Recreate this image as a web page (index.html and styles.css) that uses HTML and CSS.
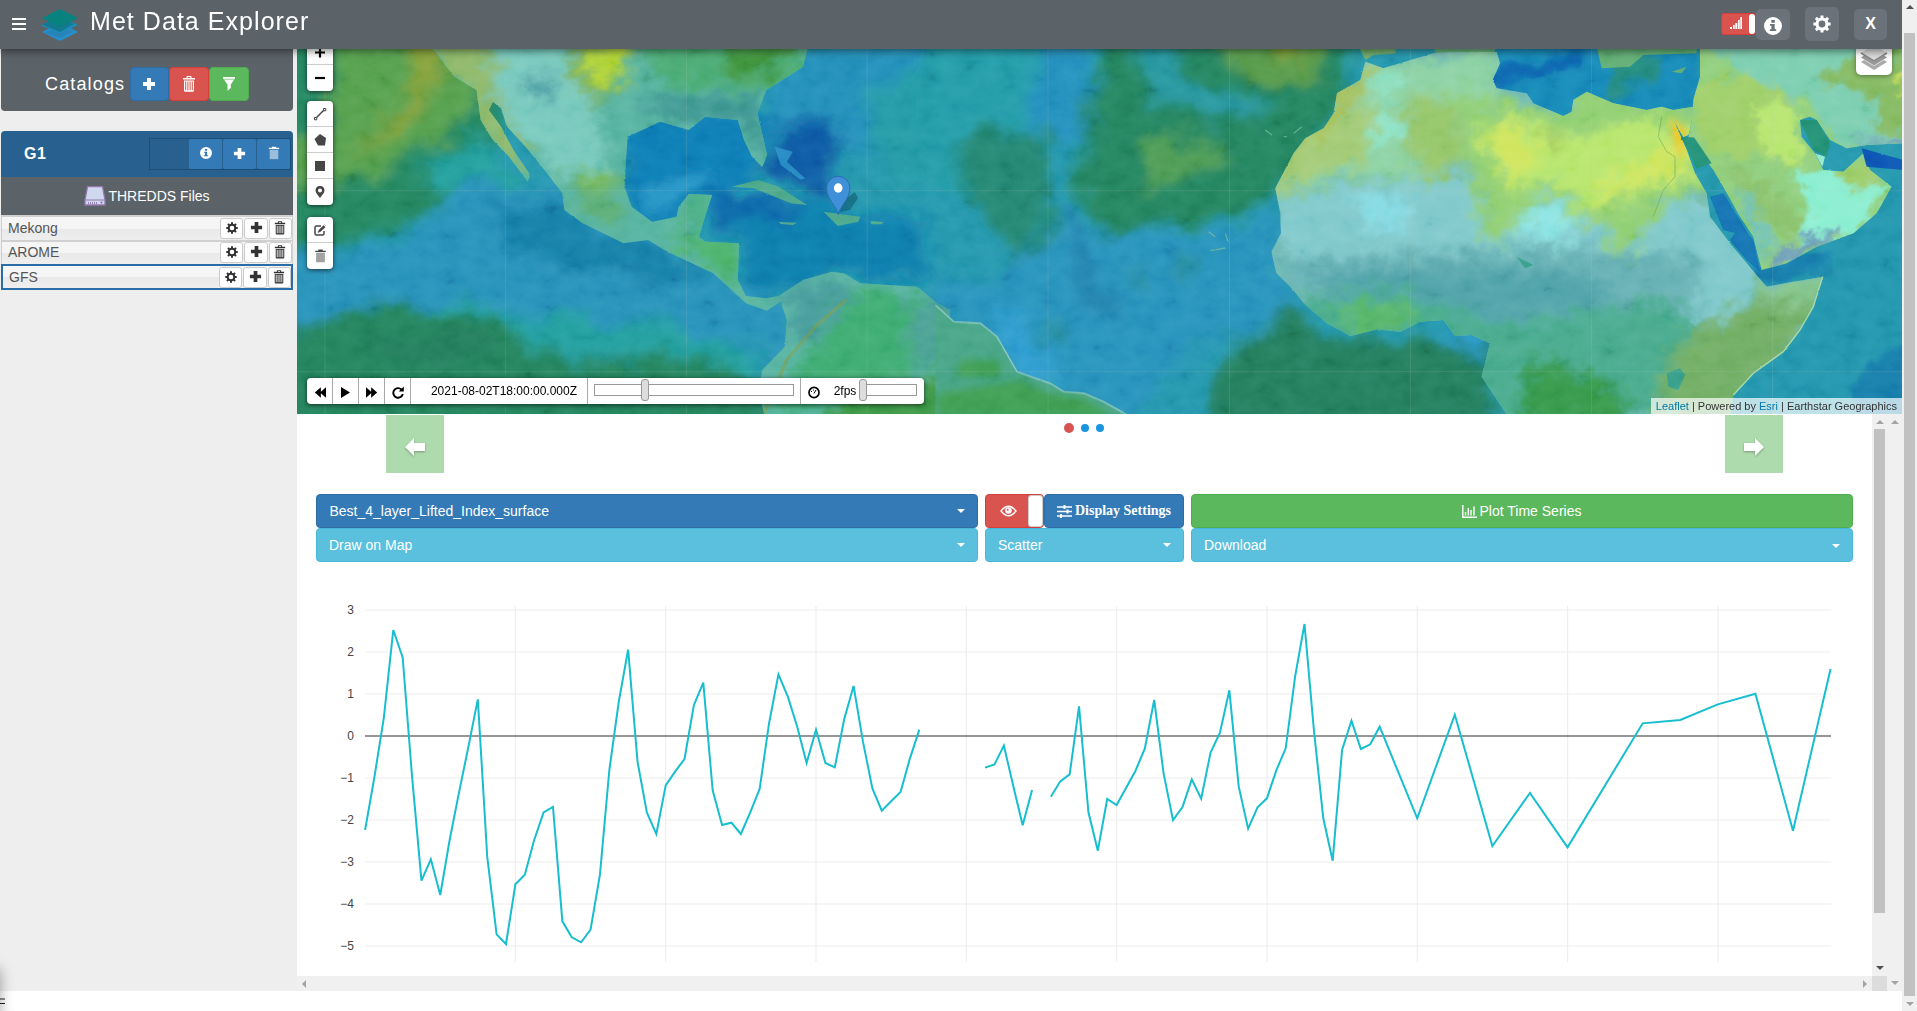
FILE: index.html
```html
<!DOCTYPE html>
<html lang="en">
<head>
<meta charset="utf-8">
<title>Met Data Explorer</title>
<link rel="stylesheet" href="styles.css">
</head>
<body>
<svg class="defs" width="0" height="0">
  <symbol id="plus" viewBox="0 0 14 14"><path d="M5 1h4v4h4v4H9v4H5V9H1V5h4z"/></symbol>
  <symbol id="trash" viewBox="0 0 14 16"><path fill-rule="evenodd" d="M4.500 2V.8Q4.500 0 5.300 0h3.400q.8 0 .8.800V2H13v1.500H1V2zM5.700 1.100V2h2.600v-.9zM2 4.500h10V14.500q0 1.200-1.200 1.200H3.200Q2 15.700 2 14.500zM3.200 5.500v8.700h1V5.500zm2.200 0v8.700h1V5.500zm2.200 0v8.700h1V5.500zm2.200 0v8.700h1V5.500z"/></symbol>
  <symbol id="trashlight" viewBox="0 0 14 16"><path d="M4.500 2V.6h5V2H13v1.300H1V2z"/><path opacity=".5" d="M2 4.200h10v11H2z"/></symbol>
  <symbol id="funnel" viewBox="0 0 14 14"><path d="M1 0h12v1.300L8.800 7.500V11L5.500 13.800V7.500L1 1.300z"/><path d="M2 2.200h10" stroke="#5cb85c" stroke-width=".7"/></symbol>
  <symbol id="info" viewBox="0 0 18 18"><path fill-rule="evenodd" d="M9 0a9 9 0 1 1 0 18A9 9 0 0 1 9 0zM7.300 3v2.700h3.500V3zM5.900 7v1.700h1.500v3.500H5.900V14h6.300v-1.800h-1.500V7z"/></symbol>
  <symbol id="cog" viewBox="-9 -9 18 18"><circle r="5" fill="none" stroke="currentColor" stroke-width="3.100"/><path d="M0-8.600V-5M0 5v3.600M-8.600 0H-5M5 0h3.600M-6.100-6.100l2.600 2.600M3.500 3.500l2.600 2.600M6.100-6.100L3.500-3.500M-3.500 3.500l-2.600 2.600" stroke="currentColor" stroke-width="3"/></symbol>
  <symbol id="arrow" viewBox="0 0 20 18"><path d="M9 0v5h11v8H9v5L0 9z"/></symbol>
  <symbol id="ff" viewBox="0 0 14 12"><path d="M0 0l6 5V0l7 6-7 6V7L0 12z"/></symbol>
</svg>

<div class="page">
  <div class="app">
    <header class="topbar">
      <svg class="burger" width="14" height="12"><path d="M0 1h14M0 6h14M0 11h14" stroke="#fff" stroke-width="2"/></svg>
      <svg class="logo" width="38" height="34" viewBox="0 0 38 34">
        <path d="M1 24L19 15l18 9-18 9z" fill="#2590cb"/><path d="M4 24.500L19 17l13 6.500L19 30z" fill="#2a83b8"/>
        <path d="M0 17.500L19 8l18 9-18 8z" fill="#1791bd"/><path d="M1 16.500L19 8l14 8-14 8z" fill="#14788e"/>
        <path d="M1 10L19 1l18 9-18 9z" fill="#07827f"/>
      </svg>
      <h1>Met Data Explorer</h1>
      <div class="tools">
        <div class="toggle small"><span><svg width="12" height="12"><path d="M0 10h2v2H0zM3 8h1.700v4H3zM5.300 6h2v6h-2zM8 3h1.700v9H8zM10.300 0H12v12h-1.700z" fill="#fff"/></svg></span></div>
        <button class="tool t1"><svg width="18" height="18"><use href="#info"/></svg></button>
        <button class="tool t2"><svg width="18" height="18"><use href="#cog"/></svg></button>
        <button class="tool t3">X</button>
      </div>
    </header>

    <div class="workspace">
      <aside class="sidebar">
        <section class="catalogs">
          <h2>Catalogs</h2>
          <button class="btn blue"><svg width="14" height="14"><use href="#plus"/></svg></button><button class="btn red"><svg width="14" height="16"><use href="#trash"/></svg></button><button class="btn green"><svg width="14" height="14"><use href="#funnel"/></svg></button>
        </section>
        <section class="group">
          <div class="group-head">
            <b>G1</b>
            <div class="group-tools">
              <i></i>
              <button><svg width="12" height="12"><use href="#info"/></svg></button>
              <button><svg width="13" height="13"><use href="#plus"/></svg></button>
              <button><svg width="12" height="14"><use href="#trashlight"/></svg></button>
            </div>
          </div>
          <div class="files-head">
            <svg width="22" height="20"><path d="M3.500.7h15L21 14v5H1v-5z" fill="#cfd8ee" stroke="#9577ab" stroke-width="1.300"/><path d="M1 14h20" stroke="#9577ab"/><path d="M4 17h10" stroke="#8668a4" stroke-width="1.500" stroke-dasharray="1 1"/><circle cx="17.500" cy="16.600" r="1" fill="#8668a4"/></svg>
            <span>THREDDS Files</span>
          </div>
          <div class="file"><span>Mekong</span><button><svg width="12" height="12"><use href="#cog"/></svg></button><button><svg width="13" height="13"><use href="#plus"/></svg></button><button><svg width="12" height="14"><use href="#trash"/></svg></button></div>
          <div class="file second"><span>AROME</span><button><svg width="12" height="12"><use href="#cog"/></svg></button><button><svg width="13" height="13"><use href="#plus"/></svg></button><button><svg width="12" height="14"><use href="#trash"/></svg></button></div>
          <div class="file active"><span>GFS</span><button><svg width="12" height="12"><use href="#cog"/></svg></button><button><svg width="13" height="13"><use href="#plus"/></svg></button><button><svg width="12" height="14"><use href="#trash"/></svg></button></div>
        </section>
      </aside>

      <main class="main">
        <div class="map">
          <svg class="raster" width="1605" height="365" viewBox="297 49 1605 365">
            <defs>
              <filter id="b1" x="-30%" y="-30%" width="160%" height="160%"><feGaussianBlur stdDeviation="11"/></filter>
              <filter id="b2" x="-40%" y="-40%" width="180%" height="180%"><feGaussianBlur stdDeviation="20"/></filter>
              <filter id="rough" x="-5%" y="-5%" width="110%" height="110%"><feTurbulence type="fractalNoise" baseFrequency=".022" numOctaves="5" seed="4"/><feDisplacementMap in="SourceGraphic" scale="38" xChannelSelector="R" yChannelSelector="G"/></filter>
              <filter id="inland" x="-5%" y="-5%" width="110%" height="110%"><feTurbulence type="fractalNoise" baseFrequency=".02" numOctaves="5" seed="11"/><feDisplacementMap in="SourceGraphic" scale="90" xChannelSelector="R" yChannelSelector="G"/></filter>
              <filter id="coast" x="-5%" y="-5%" width="110%" height="110%"><feTurbulence type="fractalNoise" baseFrequency=".12" numOctaves="2" seed="2"/><feDisplacementMap in="SourceGraphic" scale="5" xChannelSelector="R" yChannelSelector="G"/></filter>
              <filter id="grain" x="0" y="0" width="100%" height="100%"><feTurbulence type="fractalNoise" baseFrequency=".05 .07" numOctaves="5" seed="8"/><feColorMatrix values="1.400 0 0 0 -.2  1.400 0 0 0 -.2  1.400 0 0 0 -.2  0 0 0 0 1"/></filter>
              <clipPath id="namerica"><path id="na" d="M330 20L385 110 440 150 450 240 480 300 520 350 565 425 572 405 530 330 500 260 470 210 480 185 500 205 515 260 560 320 600 380 650 460 655 510 700 550 800 610 860 600 900 630 950 660 1020 700 1100 790 1150 812 1185 785 1200 840 1195 920 1140 990 1130 1050 1150 1150 1600 1150V810L1568 790 1520 740 1380 730 1340 700 1310 695 1240 720 1180 768 1150 775 1100 768 1080 720 1083 610 1000 605 985 590 1002 520 1017 465 960 462 935 500 930 530 870 545 820 500 802 440 810 290 890 245 960 270 1000 230 1080 240 1095 300 1115 350 1140 382 1152 345 1128 220 1150 150 1240 80 1252 20z"/></clipPath>
              <clipPath id="africa"><path d="M-104 65L-119 120-189 160-199 220-229 265-284 295-319 340-374 445-359 520-357 580-386 635-371 700-329 740-289 790-219 850-149 888-69 868 1 875 60 845 130 840 165 888 215 885 270 910 245 1010 325 1130 990 1130 1000 1065 1060 1000 1150 935 1200 870 1240 800 1270 710 1180 725 1100 740 1065 700 990 610 930 530 920 460 885 400 860 330 820 240 850 290 865 285 875 245 880 200 820 210 785 200 740 210 640 190 560 155 520 180 515 215 490 228 400 190 380 160 290 145 278 120 300 70 290 35 150 35 100 40 0 70-50 85z"/></clipPath>
              <clipPath id="asia"><path d="M875 245L880 180 900 110 900 20H1510V310L1400 315 1340 325 1290 300 1250 240 1230 230 1200 240 1205 290 1245 340 1270 390 1330 395 1390 340 1410 390 1475 440 1430 520 1360 580 1250 620 1160 670 1085 690 1060 590 1020 530 975 450 940 390 910 350 865 290z"/></clipPath>
            </defs>
            <rect x="297" y="49" width="1605" height="365" fill="#2497ad"/>
            <g filter="url(#rough)">
              <g transform="translate(297 40) scale(.40816 .33333)">
                <g filter="url(#b2)">
                  <path d="M-90-40H500V330L300 540-90 700z" fill="#218660"/>
                  <path d="M120-40H440L440 220 320 310 200 390 40 450-90 500V330L60 300z" fill="#55a04d"/>
                  <path d="M270-40H360L380 90 230 290 150 330 290 130z" fill="#83a038"/>
                  <path d="M330 330L460 300 560 430 300 460z" fill="#249f9d"/>
                  <path d="M450 430H660L1000 680 1210 800V1010L900 840 500 850-90 900V680L260 610 370 480z" fill="#2691b9"/>
                  <path d="M470 480L640 470 720 570 860 610 1060 740 780 700 540 640z" fill="#127fa7"/>
                  <path d="M400 780L560 830 800 850 1160 930 1140 1000 900 960 560 930 300 800z" fill="#239f9f"/>
                  <path d="M-90 920L200 780 480 830 650 950 980 960 1160 1010V1220H-90z" fill="#21835b"/>
                  <path d="M150 890L450 860 500 960 250 980z" fill="#227d5b"/>
                  <path d="M800 200H1180L1130 420 1030 480 900 600 790 440z" fill="#0f7db5"/>
                  <path d="M860 430L1010 390 1000 450 900 530z" fill="#2797c8"/>
                  <path d="M1130 60L1600-20V420L1400 300 1200 400z" fill="#248fba"/>
                  <path d="M1210 210H1300L1330 340 1300 470 1160 400 1170 300z" fill="#0758a4"/>
                  <path d="M1000 500L1300 460 1330 520 1540 540 1540 700 1250 720 1120 770 1070 620z" fill="#107ead"/>
                  <path d="M1020 460L1220 480 1200 540 1020 570z" fill="#0767aa"/>
                  <path d="M1380 160L1600 30V460L1460 430z" fill="#239aa6"/>
                </g>
              </g>
              <g transform="translate(937 40) scale(.33333)">
                <g filter="url(#b2)">
                  <path d="M-40 0H300V460H-40z" fill="#239ba8"/>
                  <path d="M100 270H340L350 690 250 680 150 560 50 400z" fill="#238672"/>
                  <path d="M310 0H420L500 250 390 330 260 220z" fill="#248fbd"/>
                  <path d="M500-30H1280L1190 260 1040 400 1010 490 700 570 500 580 420 430z" fill="#22845f"/>
                  <path d="M590 30H720L780 130 1000 190 960 240 780 240 650 180z" fill="#25969e"/>
                  <path d="M790-20H1200L1150 120 1060 150 990 140 880 60z" fill="#569a48"/>
                  <path d="M1010-10H1090L1100 60 1050 80z" fill="#7d9a30"/>
                  <path d="M610 310L820 290 860 360 750 410 640 440z" fill="#4e9c54"/>
                  <path d="M-30 700L180 730 350 560 700 590 1030 520 1010 700 1110 810 800 900 600 1130 540 1150 220 980-30 790z" fill="#2692bb"/>
                  <path d="M370 490H410L470 690 550 830 420 800z" fill="#2384ae"/>
                  <path d="M160 780L270 820 400 1070 250 990z" fill="#2d9dd0"/>
                  <path d="M690 660L760 670 760 700 700 690zM550 690L620 720 600 745zM310 860H390L370 900z" fill="#238677"/>
                  <path d="M1060 820L1200 900 1390 880 1680 900V1220H800L870 900z" fill="#217e5d"/>
                  <path d="M1500 850L1650 870 1650 980 1540 900z" fill="#2797c5"/>
                </g>
              </g>
              <g transform="translate(1400 40) scale(.33333)">
                <g filter="url(#b1)">
                  <path d="M290-20H900V230H450L280 140z" fill="#1789b8"/>
                  <path d="M620 50H760L740 130 650 170z" fill="#238b80"/>
                  <path d="M220 110L560 20 500 90 300 150z" fill="#0c65af"/>
                  <path d="M1260 560L1600 360V1200H970L1080 1010 1250 800z" fill="#2195ad"/>
                  <path d="M1420 940L1600 900V1200H1340z" fill="#157daa"/>
                  <path d="M1060 690L1290 600 1250 710 1090 750z" fill="#137cac"/>
                </g>
              </g>
            </g>
            <g transform="translate(297 40) scale(.40816 .33333)" filter="url(#coast)">
              <g clip-path="url(#namerica)">
                <rect y="20" width="1600" height="1120" fill="#57b3a1"/>
                <g filter="url(#inland)">
                <g filter="url(#b2)">
                  <path d="M320-20H460L560 330 540 430 400 200z" fill="#8db868"/>
                  <path d="M470-20H650L730 230 760 400 650 430 500 220z" fill="#77c9bd"/>
                  <path d="M560 110h70v60h-70z" fill="#499ba4"/>
                  <path d="M670-30H820L800 150 730 190 670 130z" fill="#7ab155"/>
                  <path d="M730-30H790L800 110 760 150 710 110z" fill="#b4d637"/>
                  <path d="M820-20H1250V150L900 150z" fill="#48aa72"/>
                  <path d="M1080-20H1250L1150 110 1040 110z" fill="#41953c"/>
                  <path d="M830 180L1140 160 1160 370 1080 250 880 240z" fill="#3c9692"/>
                  <path d="M650 400H790L800 550 700 540z" fill="#5bae77"/>
                  <path d="M700 395h60v50h-60z" fill="#7cbb4b"/>
                  <path d="M900 560L1100 610 1090 770 1150 810 1050 730z" fill="#4cb26b"/>
                  <path d="M950 450h70v110h-70z" fill="#48af83"/>
                  <path d="M1200 720H1380L1300 900 1200 900z" fill="#469c9c"/>
                  <path d="M1370 730L1600 800V950L1250 1120H1150z" fill="#3dac72"/>
                  <path d="M1510 760L1640 800V1010L1500 960z" fill="#48a094"/>
                  <path d="M1330 1050L1640 1000V1180H1300z" fill="#3c9946"/>
                </g>
                </g>
                <path d="M1345 780L1270 860 1200 960 1140 1130" fill="none" stroke="#7c9c4c" stroke-width="9" opacity=".6"/>
              </g>
              <path d="M1065 440L1130 420 1180 440 1250 495 1210 490 1120 445zM1290 515L1380 530 1375 545 1325 558zM1180 546l45 2-10 7-30-3zM1405 543l32 3-5 7h-25z" fill="#4ca88a"/>
              <path d="M1170 320l45 15-15 30 45 50-10 5-50-45zM1265 430l10 10" fill="#2d95cb" opacity=".8"/>
            </g>
            <g transform="translate(937 40) scale(.33333)" filter="url(#coast)">
              <path d="M-5 795L50 845 130 850 180 890 240 995 340 1030 380 1055 440 1060 500 1085 580 1130H-5z" fill="#46a486"/>
              <path d="M-5 795L50 845 130 850 180 890 240 995 340 1030 380 1055 440 1060 500 1085 580 1130" fill="none" stroke="#8fcac0" stroke-width="4"/>
              <path d="M0 1060L250 1020 340 1060 440 1075 530 1130H0zM70 960h120v50H60z" fill="#3c9d51" filter="url(#b1)"/>
              <path d="M815 575l20 15M865 580l8 25M820 632l45-8M985 270l20 15M1040 290h10M1070 280l25-20" stroke="#79bda0" stroke-width="4" opacity=".7"/>
              <path d="M1265 20L1285 60 1310 45 1375 40V20z" fill="#72ad6a"/>
            </g>
            <g transform="translate(1400 40) scale(.33333)" filter="url(#coast)">
              <path d="M100 20H290L270 60 220 110 120 70zM590 20L605 85 690 80 730 45 890 40V20zM815 95l45-15-15 20z" fill="#5fac72"/>
              <g clip-path="url(#africa)">
                <rect x="-400" y="20" width="1700" height="1120" fill="#70bab6"/>
                <g filter="url(#inland)">
                <g filter="url(#b1)">
                  <path d="M-400 480L-200 440 100 390 900 480 1100 700 1000 850-300 730z" fill="#7fc8cb"/>
                </g>
                <g filter="url(#b2)">
                  <path d="M-400 660L0 640 550 620 900 640 900 800 400 900-200 790z" fill="#66b0b4"/>
                  <path d="M-350 710L100 680 550 690 650 790 250 850z" fill="#4fa3a9"/>
                  <path d="M-300 770L0 750 300 850 800 780 900 860 760 1140H200V930H-300z" fill="#46aa8d"/>
                  <path d="M380 950L560 1000 700 1080 660 1150H360z" fill="#34984a"/>
                  <path d="M900 860L1100 780 1290 740 1160 950 980 1140H760L800 960z" fill="#71ad64"/>
                  <path d="M1060 740L1280 700 1250 800 1080 780z" fill="#83c58a"/>
                  <path d="M-220 800L0 770 60 850-100 900z" fill="#57b669"/>
                </g>
                <g filter="url(#b2)">
                  <path d="M-110 50L60 60 290 20 310 160 150 220 210 350 100 420-150 420-410 480-400 390-190 150z" fill="#8cd1a3"/>
                  <path d="M-120 60L-80 80-140 200 -330 400-400 440-300 250-200 180z" fill="#a7bf50"/>
                  <path d="M-80 190L-40 280-130 380-230 400-410 490-330 330z" fill="#a2ca75"/>
                  <path d="M-60 100L20 90-60 200 20 280-100 340-70 230z" fill="#8de5cb"/>
                  <path d="M20 180L150 170 200 360 90 420 20 330z" fill="#95c669"/>
                  <path d="M-140 470H30L10 560-100 560z" fill="#86dbe4"/>
                  <path d="M330 570L420 470 540 540 480 610z" fill="#8de4e3"/>
                  <path d="M150 160L500 210 530 130 880 180 940 450 800 490 660 660 600 550 500 520 440 440 350 570 265 610 220 440 180 260z" fill="#91cf72"/>
                  <path d="M220 270L340 230 520 290 750 230 870 290 880 410 650 480 600 510 530 510 480 420 330 450z" fill="#b8e66d"/>
                  <path d="M240 290L350 240 410 360 330 440 310 360zM720 370L830 300 850 400 680 440 570 510 620 430z" fill="#d0e55c"/>
                  <path d="M430 280h45v45h-45z" fill="#9dbe51"/>
                </g>
                </g>
                <path d="M810 230L860 270 850 370 820 300z" fill="#f0c92b" filter="url(#b1)"/>
                <path d="M785 230L775 290 800 335 825 350 825 410 790 450 760 530" fill="none" stroke="#67944c" stroke-width="3" opacity=".5"/>
                <path d="M800 1000l40-15 15 20-20 45-30-10zM740 1005l50-60M350 650l50 25-25 10z" fill="#37a08c"/>
              </g>
              <path d="M1000 1065L1060 1000 1150 935 1200 870 1240 800 1268 710" fill="none" stroke="#a6d9a5" stroke-width="4"/>
              <g clip-path="url(#asia)">
                <rect x="860" y="20" width="660" height="680" fill="#8fce7c"/>
                <g filter="url(#inland)">
                <g filter="url(#b1)">
                  <path d="M890-20H1560V330L1340 330 1210 180 1000 90z" fill="#7bceb0"/>
                  <path d="M1250 120L1400 30 1560 40V290L1430 280 1420 170z" fill="#84b961"/>
                  <path d="M1470 100L1560 90V200z" fill="#c6df4e"/>
                  <path d="M880 130L1050 110 1180 170 1200 390 1110 350 960 350 870 260z" fill="#9fcf69"/>
                  <path d="M1050 200L1180 190 1210 370 1100 350z" fill="#b7e670"/>
                  <path d="M960 360L1100 430 1250 560 1160 600 1050 480z" fill="#8ac26c"/>
                  <path d="M1170 390L1300 390 1480 430 1370 590 1200 620 1230 500z" fill="#8aeed0"/>
                  <path d="M1310 390L1400 350 1430 430 1350 450z" fill="#9ccc68"/>
                  <path d="M1000 450L1060 470 1120 590 1090 680 1060 590z" fill="#73c3b1"/>
                  <path d="M1110 640L1280 580 1310 600 1130 680zM1340 310L1560 290V330z" fill="#6c9dbb"/>
                </g>
                </g>
              </g>
              <path d="M843 292L882 292 935 370 890 385z" fill="#239278"/>
              <path d="M1020 560L1060 600 1080 695 1040 660 990 600zM930 470L970 460 1050 590 970 570z" fill="#0965b5" opacity=".75"/>
              <path d="M1200 240L1250 240 1290 310 1280 350 1240 330z" fill="#219175"/>
              <path d="M1385 325L1510 360V390L1400 380z" fill="#0a55b4"/>
              <path d="M1245 340l30 10-8 30z" fill="#92e9cc"/>
            </g>
            <path d="M297 190.700H1902M297 371.700H1902M325 49V414M505.500 49V414M686.500 49V414M867.200 49V414M1048 49V414M1229.500 49V414M1410.500 49V414M1591.500 49V414M1772.500 49V414" stroke="#b9c8b4" stroke-opacity=".15" fill="none"/>
            <rect class="relief" x="297" y="49" width="1605" height="365" filter="url(#grain)"/>
            <path d="M840 212l5-13 10-7 3 6-8 12z" fill="#073f51" opacity=".4"/>
            <path d="M838.200 214.500C837 207 826.500 199 826.500 188a11.700 11.700 0 0 1 23.400 0C849.900 199 839.500 207 838.200 214.500z" fill="#3f90d8" stroke="#2b6cab"/><ellipse cx="838.200" cy="188" rx="4.300" ry="4.700" fill="#fff"/>
          </svg>

          <div class="ctl zoomctl"><span><svg width="12" height="12"><path d="M6 1.500v10M1 6.500h10" stroke="#000" stroke-width="2.200"/></svg></span><span><svg width="12" height="12"><path d="M1 6h10" stroke="#000" stroke-width="2.200"/></svg></span></div>
          <div class="ctl drawctl">
            <span><svg width="14" height="14"><path d="M3 11L11 3" stroke="#444" stroke-width="1.500"/><path d="M1.500 10.500h2.300v2.300H1.500zM10.500 1.500h2.300v2.300h-2.300z" fill="#fff" stroke="#444"/></svg></span>
            <span><svg width="14" height="14"><path d="M7 1l6 4-1 7.500H5L1.500 6z" fill="#464646"/></svg></span>
            <span><svg width="14" height="14"><path d="M2 2h10v10H2z" fill="#464646"/></svg></span>
            <span><svg width="14" height="14"><path fill-rule="evenodd" d="M7 1c3 0 4.500 2 4.500 4.500C11.500 8 8.500 10.500 7 13 5.500 10.500 2.500 8 2.500 5.500 2.500 3 4 1 7 1zm0 2.500a2 2 0 1 0 0 4 2 2 0 0 0 0-4z" fill="#464646"/></svg></span>
          </div>
          <div class="ctl editctl">
            <span><svg width="14" height="14"><path d="M8 3H3.500Q2 3 2 4.500V10.500Q2 12 3.500 12H9.500Q11 12 11 10.500V8" fill="none" stroke="#464646" stroke-width="1.500"/><path d="M5 9.500l1-2.500 4.500-4.500 1.700 1.700L7.500 8.500zM11.500 1.500l1 1" fill="#464646" stroke="#464646" stroke-width=".5"/></svg></span>
            <span class="muted"><svg width="13" height="14"><use href="#trashlight"/></svg></span>
          </div>
          <div class="layers"><svg width="28" height="26" viewBox="0 0 28 26"><path d="M1 17l13 8 13-8-3-2-10 6-10-6z" fill="#aaa"/><path d="M1 12.500l13 8 13-8-3-2-10 6-10-6z" fill="#999"/><path d="M1 8L14 0l13 8-13 8z" fill="#ddd"/><path d="M1 8l13 8 13-8" fill="none" stroke="#888" stroke-width="1.500"/></svg></div>

          <div class="timebar">
            <span class="tb"><svg class="flip" width="12" height="11"><use href="#ff"/></svg></span>
            <span class="tb"><svg width="9" height="11"><path d="M0 0l9 5.500L0 11z"/></svg></span>
            <span class="tb"><svg width="12" height="11"><use href="#ff"/></svg></span>
            <span class="tb"><svg width="12" height="13"><path d="M9.500 3.500A4.800 4.800 0 1 0 10.800 8" fill="none" stroke="#000" stroke-width="1.900"/><path d="M11.800.5v5h-5z"/></svg></span>
            <span class="stamp">2021-08-02T18:00:00.000Z</span>
            <span class="slide"><i class="track"><b></b></i></span>
            <span class="fps"><svg width="12" height="13"><ellipse cx="6" cy="6.500" rx="5" ry="5.200" fill="none" stroke="#000" stroke-width="1.700"/><path d="M6 7.500L8 4M3 5.500h1M5 4h1" stroke="#000"/></svg><em>2fps</em><i class="track"><b></b></i></span>
          </div>
          <div class="credit"><a>Leaflet</a> | Powered by <a>Esri</a> | Earthstar Geographics</div>
        </div>

        <div class="lower">
          <div class="panel">
            <div class="pager">
              <button class="nav"><svg width="20" height="18"><use href="#arrow"/></svg></button>
              <div class="dots"><i class="on"></i><i></i><i></i></div>
              <button class="nav next"><svg class="flip" width="20" height="18"><use href="#arrow"/></svg></button>
            </div>
            <div class="controls">
              <button class="field blue">Best_4_layer_Lifted_Index_surface<i class="caret"></i></button>
              <div class="pair">
                <div class="toggle"><span><svg width="17" height="12"><path d="M1 6Q8.500-3.500 16 6 8.500 15.500 1 6z" fill="none" stroke="#fff" stroke-width="1.400"/><circle cx="8.500" cy="5.500" r="3.300" fill="#fff"/><circle cx="7.700" cy="4.700" r="1" fill="#d9534f"/></svg></span></div>
                <button class="field blue settings"><svg width="15" height="13"><path d="M0 2h15M0 6.500h15M0 11h15" stroke="#fff" stroke-width="1.500"/><path d="M7.500 0v4M10.500 4.500v4M4 9v4" stroke="#fff" stroke-width="2"/></svg>Display Settings</button>
              </div>
              <button class="field green"><svg width="15" height="13"><path d="M.8 0v12.200H15M3.500 10.500V7M6.300 10.500V3M9 10.500V5M12 10.500V1.500" fill="none" stroke="#fff" stroke-width="1.400"/></svg>Plot Time Series</button>
              <button class="field sky">Draw on Map<i class="caret"></i></button>
              <button class="field sky">Scatter<i class="caret"></i></button>
              <button class="field sky">Download<i class="caret low"></i></button>
            </div>
            <svg class="chart" width="1575" height="414" viewBox="297 562 1575 414">
              <path d="M365 610H1831M365 652H1831M365 694H1831M365 778H1831M365 820H1831M365 862H1831M365 904H1831M365 946H1831M515.300 606V962M665.600 606V962M816 606V962M966.300 606V962M1116.600 606V962M1267 606V962M1417.300 606V962M1567.600 606V962M1718 606V962" stroke="#eee" stroke-width="1.200"/>
              <path d="M365 736H1831" stroke="#444" stroke-opacity=".75" stroke-width="1.300"/>
              <g class="ticks"><text x="354" y="614">3</text><text x="354" y="656">2</text><text x="354" y="698">1</text><text x="354" y="740">0</text><text x="354" y="782">−1</text><text x="354" y="824">−2</text><text x="354" y="866">−3</text><text x="354" y="908">−4</text><text x="354" y="950">−5</text></g>
              <g class="series" transform="translate(365.100 580) scale(9.394 .33333)">
                <polyline points="0,750 1,590 2,412 3,150 4,232 5,590 6,902 7,838 8,945 9,780 10,637 11,500 12,358 13,830 14,1063 15,1092 16,913 17,884 18,780 19,697 20,681 21,1024 22,1072 23,1087 24,1049 25,884 26,570 27,366 28,209 29,545 30,698 31,762 32,616 33,575 34,537 35,375 36,308 37,631 38,735 39,728 40,762 41,697 42,627 43,430 44,283 45,350 46,440 47,549 48,449 49,549 50,562 51,418 52,318 53,485 54,625 55,692 56,664 57,636 58,535 59,449"/>
                <polyline points="66,563 67,553 68,497 69,618 70,736 71,630"/>
                <polyline points="73,650 74,604 75,583 76,379 77,697 78,812 79,657 80,675 81,624 82,573 83,506 84,360 85,580 86,720 87,682 88,598 89,656 90,518 91,458 92,331 93,620 94,746 95,682 96,655 97,571 98,505 99,290 100,132 101,450 102,715 103,842 104,510 105,422 106,507 107,493 108,440 112,715 116,404 120,798 124,639 128,802 136,430 140,420 144,373 148,341 152,752 156,267"/>
              </g>
            </svg>
          </div>
          <div class="vbar inner"><i class="up pale"></i><b></b><i class="down"></i></div>
          <div class="vbar outer"><i class="up pale"></i><i class="down pale"></i></div>
          <div class="hbar"><i class="left"></i><i class="right"></i></div>
          <div class="corner"></div>
        </div>
      </main>
    </div>
    <div class="foot"><svg width="6" height="7"><path d="M0 1h5M0 5.500h5" stroke="#222" stroke-width="1.200"/></svg></div>
    <div class="edge-shade"></div>
  </div>
  <div class="vbar window"><i class="up"></i><b></b><i class="down pale"></i></div>
</div>
</body>
</html>
```

FILE: styles.css
```css
* { box-sizing: border-box; }
body { margin: 0; background: #fff; font-family: "Liberation Sans", Arial, sans-serif; font-size: 14px; line-height: 20px; overflow: hidden; }
button { font: inherit; border: 0; padding: 0; margin: 0; display: flex; align-items: center; justify-content: center; }
svg { display: block; flex: none; }
.defs { position: absolute; }
.flip { transform: scaleX(-1); }
.page { display: grid; grid-template-columns: 1fr 15px; width: 1917px; height: 1011px; }
.app { display: flex; flex-direction: column; position: relative; overflow: hidden; }

.topbar { height: 49px; flex: none; display: flex; align-items: center; background: #5b6268; padding: 0 15px 0 12px; color: #fff; position: relative; z-index: 5; box-shadow: 0 2px 8px rgba(0,0,0,.5); }
.burger { margin-bottom: 1px; }
.logo { margin: 0 0 0 15px; }
.topbar h1 { margin: 0 0 8px 11px; font-size: 25px; line-height: 30px; font-weight: 400; letter-spacing: 1.05px; }
.tools { margin-left: auto; display: flex; align-items: center; }
.toggle { display: flex; width: 59px; height: 34px; background: #d9534f; border: 1px solid #d43f3a; border-radius: 4px; color: #fff; }
.toggle span { flex: 1; display: grid; place-items: center; padding-left: 2px; }
.toggle::after { content: ""; width: 13px; background: #fff; border: 1px solid #ccc; border-radius: 3px; }
.toggle.small { width: 35px; height: 22px; border-radius: 3px; margin-bottom: 2px; }
.toggle.small::after { width: 6px; border: 0; }
.toggle.small span { padding: 0 0 2px 0; }
.tool { background: #6b727a; color: #fff; fill: #fff; border-radius: 5px; width: 34px; }
.t1 { height: 31px; padding-top: 3px; }
.t2 { height: 34px; margin: 0 0 1px 15px; }
.t3 { height: 31px; width: 33px; margin-left: 15px; font-weight: 700; font-size: 16px; padding-bottom: 1px; }

.workspace { display: flex; height: 942px; flex: none; }
.sidebar { width: 297px; flex: none; background: #eee; padding: 0 4px 0 1px; }
.catalogs { height: 62px; background: #5b6268; border-radius: 0 0 4px 4px; display: flex; align-items: center; padding: 10px 0 2px 44px; color: #fff; }
.catalogs h2 { margin: 0; width: 84.500px; font-size: 18px; font-weight: 400; letter-spacing: 1.150px; }
.btn { width: 39.900px; height: 34px; border: 1px solid; border-radius: 4px; fill: #fff; }
.blue { background: #337ab7; border-color: #2e6da4; }
.red { background: #d9534f; border-color: #d43f3a; }
.green { background: #5cb85c; border-color: #4cae4c; }
.group { margin-top: 20px; }
.group-head { height: 46px; background: #286090; border-radius: 4px 4px 0 0; display: flex; align-items: center; justify-content: space-between; padding: 0 2px 0 23px; color: #fff; }
.group-head b { font-size: 16px; letter-spacing: .5px; }
.group-tools { display: flex; width: 142px; height: 32px; border: 1px solid #204d74; gap: 1px; }
.group-tools i { flex: 1; }
.group-tools button { width: 33px; background: #337ab7; fill: #fff; border-radius: 2px; padding: 0 0 2px 0; }
.files-head { height: 38px; background: #5b6268; color: #fff; display: flex; align-items: center; justify-content: center; gap: 2px; }
.file { height: 24.500px; display: flex; align-items: center; gap: 1px; color: #555; background: linear-gradient(#f5f5f5 50%, #e9e9e9 50%, #eee); border: 1px solid #d0d0d0; border-top-width: 2px; border-bottom: 0; padding: 0 0 0 6px; }
.file span { flex: 1; }
.file button { width: 23.300px; height: 21px; background: #fff; border: 1px solid #ccc; border-radius: 3px; fill: #333; color: #333; padding-bottom: 1px; }
.file.second { padding-bottom: 1px; }
.file.active { height: 26px; border: 2px solid #286da8; }

.main { flex: 1; display: flex; flex-direction: column; min-width: 0; }
.map { height: 365px; position: relative; overflow: hidden; flex: none; }
.relief { mix-blend-mode: soft-light; opacity: .2; }
.ctl { position: absolute; left: 10px; width: 26px; background: #fff; border-radius: 4px; box-shadow: 0 1px 5px rgba(0,0,0,.65); }
.ctl span { height: 26px; display: grid; place-items: center; border-bottom: 1px solid #ccc; }
.ctl span:last-child { border-bottom: 0; }
.muted { fill: #464646; }
.zoomctl { top: -10px; }
.drawctl { top: 52px; }
.editctl { top: 168px; }
.layers { position: absolute; right: 10px; top: -10px; width: 36px; height: 36px; background: #fff; border-radius: 5px; display: grid; place-items: center; padding-top: 1px; box-shadow: 0 1px 5px rgba(0,0,0,.4); }
.timebar { position: absolute; left: 10px; bottom: 10px; height: 26px; width: 617px; background: #fff; border-radius: 4px; display: flex; font-size: 12px; box-shadow: 0 1px 5px rgba(0,0,0,.65); }
.timebar > span { display: flex; align-items: center; justify-content: center; border-right: 1px solid #aaa; }
.timebar > span:last-child { border: 0; }
.tb { width: 26px; padding-top: 3px; }
.stamp { width: 177px; padding-left: 10px; }
.slide { width: 213px; }
.track { display: block; width: 200px; height: 12px; margin-bottom: 2px; border: 1px solid #999; position: relative; }
.track b { position: absolute; left: 46px; top: -6px; width: 8px; height: 22px; background: #ddd; border: 1px solid #999; border-radius: 3px; }
.fps { flex: 1; }
.fps svg { margin: 3px 14px 0 0; }
.fps em { font-style: normal; margin-right: 3px; }
.fps .track { width: 58px; }
.fps .track b { left: -1px; }
.credit { position: absolute; right: 0; bottom: 0; height: 16px; line-height: 16px; font-size: 11px; padding: 0 5px; background: rgba(255,255,255,.7); color: #333; }
.credit a { color: #0078a8; }

.lower { flex: 1; display: grid; grid-template: 562px 15px / 1575px 15px 15px; }
.panel { overflow: hidden; background: #fff; }
.pager { display: flex; justify-content: space-between; padding: 1px 89px 21px; }
.nav { width: 58px; height: 58px; background: #addbad; fill: #fff; padding-top: 5px; }
.nav svg { filter: drop-shadow(0 1px 1px rgba(0,0,0,.3)); }
.dots { display: flex; align-items: center; gap: 7px; height: 26px; margin-right: 2px; }
.dots i { width: 8px; height: 8px; border-radius: 50%; background: #1b95e0; }
.dots .on { width: 10px; height: 10px; background: #d9534f; }
.controls { display: grid; grid-template: 34px 34px / 662px 199px 662px; column-gap: 7px; padding-left: 19px; }
.pair { display: flex; }
.field { width: 100%; height: 34px; border: 1px solid; border-radius: 4px; color: #fff; padding: 0 12px; justify-content: space-between; }
.field.blue { border-color: #2e6da4; padding-left: 12.500px; }
.field.green { border-color: #4cae4c; justify-content: center; gap: 3px; padding: 0 13px 0 12px; }
.sky { background: #5bc0de; border-color: #46b8da; }
.field.settings { width: 140px; font-family: "Liberation Serif", serif; font-weight: 700; justify-content: center; gap: 3px; padding: 0; }
.caret { border: 4px solid transparent; border-top-color: #fff; border-bottom: 0; }
.caret.low { margin-top: 2px; }
.ticks { font-size: 12px; fill: #444; text-anchor: end; }
.series polyline { fill: none; stroke: #17becf; stroke-width: 2; vector-effect: non-scaling-stroke; }

.vbar { background: #f0f0f0; display: flex; flex-direction: column; align-items: center; padding: 6px 0; }
.vbar b { width: 11px; background: #c1c1c1; }
.vbar .down { margin-top: auto; }
.up { border: 4px solid transparent; border-bottom-color: #505050; border-top: 0; }
.down { border: 4px solid transparent; border-top-color: #505050; border-bottom: 0; }
.up.pale { border-bottom-color: #a3a3a3; }
.down.pale { border-top-color: #a3a3a3; }
.inner b { height: 484px; margin-top: 5px; }
.outer { grid-row: 1 / 3; grid-column: 3; }
.window { padding: 5px 0; }
.window b { height: 963px; margin-top: 24px; }
.hbar { grid-row: 2; grid-column: 1; background: #f0f0f0; display: flex; justify-content: space-between; align-items: center; padding: 0 5px; }
.left { border: 4px solid transparent; border-right-color: #a3a3a3; border-left: 0; }
.right { border: 4px solid transparent; border-left-color: #a3a3a3; border-right: 0; }
.corner { background: #dcdcdc; }
.foot { flex: 1; padding-top: 7px; }
.edge-shade { position: absolute; left: -22px; bottom: -8px; width: 22px; height: 50px; box-shadow: 0 0 14px rgba(0,0,0,.35); }
```
